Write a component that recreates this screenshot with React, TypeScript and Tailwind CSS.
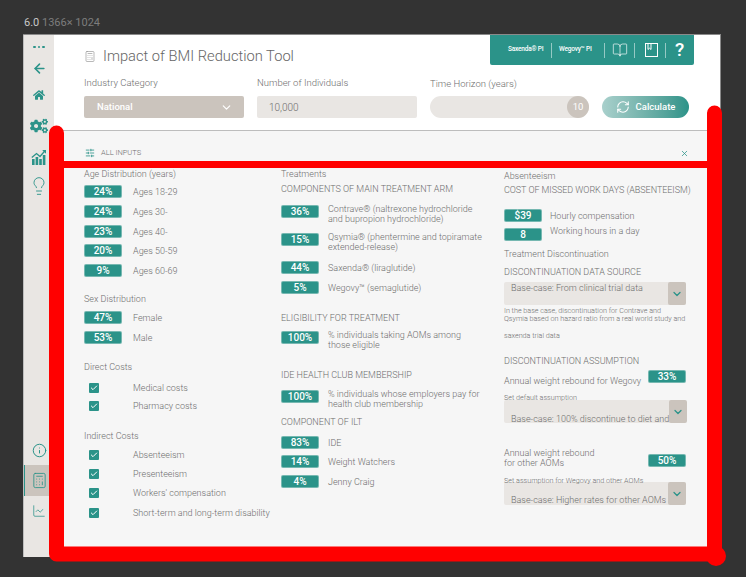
import { ArrowLeft, BookOpen, Calculator, Check, ChartLine, ChevronDown, Info, Lightbulb, RefreshCw, SlidersHorizontal, X } from "lucide-react";
import { FaCogs, FaHome } from "react-icons/fa";

function Pill({ value }: { value: string }) {
    return (
        <div className="w-[38px] h-[13px] shrink-0 rounded-[2px] bg-[#2b9389] border border-[#a9d0cc]/60 flex items-center justify-center text-[10px] font-medium text-white">
            {value}
        </div>
    );
}

function PillRow({ value, label, className }: { value: string; label: string; className: string }) {
    return (
        <div className={`flex items-center h-[13px] ${className}`}>
            <Pill value={value} />
            <span className="ml-[11px] whitespace-nowrap leading-[12px]">{label}</span>
        </div>
    );
}

function TallRow({ value, lines, className }: { value: string; lines: string[]; className: string }) {
    return (
        <div className={`flex items-start ${className}`}>
            <Pill value={value} />
            <div className="ml-[9px] -mt-px leading-[10px] whitespace-nowrap">
                {lines.map((line) => (
                    <div key={line}>{line}</div>
                ))}
            </div>
        </div>
    );
}

function CheckRow({ label, className }: { label: string; className: string }) {
    return (
        <div className={`flex items-center h-[10px] ${className}`}>
            <div className="ml-[5px] w-[10px] h-[10px] shrink-0 rounded-[1px] bg-[#2b9389] flex items-center justify-center">
                <Check className="w-[8px] h-[8px] text-white" strokeWidth={3} />
            </div>
            <span className="ml-[34px] whitespace-nowrap leading-[12px]">{label}</span>
        </div>
    );
}

function Heading({ children, className = "" }: { children: string; className?: string }) {
    return <div className={`h-[12px] leading-[12px] whitespace-nowrap ${className}`}>{children}</div>;
}

function Dropdown({ text, className, textClass }: { text: string; className: string; textClass: string }) {
    return (
        <div className={`w-[182px] h-[23px] rounded-[2px] bg-[#e9e6e3] flex justify-between ${className}`}>
            <span className={`pl-[7px] leading-[12px] whitespace-nowrap ${textClass}`}>{text}</span>
            <div className="w-[18px] h-[23px] shrink-0 rounded-[2px] bg-[#cbc4bd] flex items-center justify-center">
                <ChevronDown className="w-[12px] h-[12px] text-[#2b9389]" strokeWidth={2.5} />
            </div>
        </div>
    );
}

function BookmarkBook() {
    return (
        <svg viewBox="0 0 13 14" className="w-[13px] h-[14px]" fill="none" stroke="currentColor" strokeWidth="1">
            <rect x="0.5" y="0.5" width="12" height="13" />
            <path d="M3 0.5V6.5L4.5 5.2L6 6.5V0.5" />
        </svg>
    );
}

function BarsArrow() {
    return (
        <svg viewBox="0 0 16 16" className="w-[16px] h-[16px]" fill="#2b9389">
            <rect x="1" y="10" width="2.6" height="6" />
            <rect x="4.6" y="8" width="2.6" height="8" />
            <rect x="8.2" y="10" width="2.6" height="6" />
            <rect x="11.8" y="6" width="2.6" height="10" />
            <path d="M0.8 8.5L5.5 4.5L9 7.5L14 1.8" fill="none" stroke="#2b9389" strokeWidth="1.3" />
            <path d="M11.2 1H15V4.8Z" />
        </svg>
    );
}

function Divider() {
    return <div className="w-px h-[15px] bg-white/50" />;
}

export default function App() {
    return (
        <div className="relative w-[746px] h-[577px] overflow-hidden bg-[#333333] font-['Roboto',sans-serif] font-light text-[9px] text-[#6e6e6e]">
            <div className="h-[34px] pl-[24px] pt-[16px] text-[11px] leading-[14px] font-normal whitespace-nowrap">
                <span className="text-[#c8c8c8]">6.0</span> <span className="text-[#7d7d7d]">1366×&nbsp;1024</span>
            </div>

            <div className="ml-[23px] w-[698px] h-[523px] flex border-t border-r border-[#8a8a8a] bg-white">
                {/* Sidebar */}
                <aside className="w-[31px] shrink-0 border-l border-[#bdbdbd] bg-[#e9e6e3] flex flex-col items-stretch text-[#2b9389]">
                    <div className="h-[24px] flex items-center justify-center gap-[2px]">
                        <span className="w-[2.5px] h-[2.5px] rounded-full bg-[#2b9389]" />
                        <span className="w-[2.5px] h-[2.5px] rounded-full bg-[#2b9389]" />
                        <span className="w-[2.5px] h-[2.5px] rounded-full bg-[#2b9389]" />
                    </div>
                    <div className="h-[18px] flex items-center justify-center">
                        <ArrowLeft className="w-[15px] h-[15px]" strokeWidth={2.5} />
                    </div>
                    <div className="h-[36px] flex items-center justify-center">
                        <FaHome className="w-[12px] h-[12px]" />
                    </div>
                    <div className="h-[26px] flex items-center justify-center">
                        <FaCogs className="w-[18px] h-[18px]" />
                    </div>
                    <div className="h-[36px] flex items-center justify-center">
                        <BarsArrow />
                    </div>
                    <div className="h-[22px] flex items-center justify-center">
                        <Lightbulb className="w-[20px] h-[20px]" strokeWidth={1.1} />
                    </div>
                    <div className="mt-auto h-[30px] flex items-center justify-center">
                        <Info className="w-[15px] h-[15px]" strokeWidth={1.6} />
                    </div>
                    <div className="h-[31px] bg-[#cbc4bd] border-l border-[#2b9389] flex items-center justify-center">
                        <Calculator className="w-[17px] h-[17px]" strokeWidth={1.2} />
                    </div>
                    <div className="h-[30px] mb-[31px] flex items-center justify-center">
                        <ChartLine className="w-[14px] h-[14px]" strokeWidth={1.3} />
                    </div>
                </aside>

                <main className="flex-1 flex flex-col min-w-0">
                    {/* Header */}
                    <header className="h-[96px] shrink-0 border-b border-[#bdbdbd]">
                        <div className="h-[30px] flex justify-between">
                            <div className="ml-[30px] mt-[11px] h-[20px] flex items-center">
                                <Calculator className="w-[12px] h-[13px] text-[#8a8a8a]" strokeWidth={1.2} />
                                <h1 className="ml-[7px] text-[14.7px] leading-[20px] font-light text-[#666666] whitespace-nowrap">Impact of BMI Reduction Tool</h1>
                            </div>
                            <div className="w-[204px] mr-[26px] h-[30px] rounded-b-[2px] bg-[#2b9389] flex items-center pl-[18px] text-white">
                                <span className="w-[39px] text-[6.5px] font-medium tracking-[-0.2px] whitespace-nowrap">Saxenda® PI</span>
                                <div className="mx-[4px]"><Divider /></div>
                                <span className="w-[41px] ml-[3px] text-[6.5px] font-medium tracking-[-0.2px] whitespace-nowrap">Wegovy™ PI</span>
                                <div className="ml-[4px]"><Divider /></div>
                                <BookOpen className="ml-[7px] w-[16px] h-[16px]" strokeWidth={1} />
                                <div className="ml-[6px]"><Divider /></div>
                                <div className="ml-[10px]"><BookmarkBook /></div>
                                <div className="ml-[7px]"><Divider /></div>
                                <span className="ml-[9px] text-[19px] leading-[20px] font-medium">?</span>
                            </div>
                        </div>
                        <div className="mt-[12px] ml-[30px] flex gap-[13px] text-[9.5px]">
                            <div className="w-[160px]">
                                <div className="h-[12px] leading-[12px]">Industry Category</div>
                                <div className="mt-[7px] h-[22px] rounded-[2px] bg-[#cbc4bd] flex items-center justify-between pl-[13px] pr-[11px] text-white font-medium">
                                    <span>National</span>
                                    <ChevronDown className="w-[13px] h-[13px]" strokeWidth={2.2} />
                                </div>
                            </div>
                            <div className="w-[160px]">
                                <div className="h-[12px] leading-[12px]">Number of Individuals</div>
                                <div className="mt-[7px] h-[22px] rounded-[2px] bg-[#e9e6e3] flex items-center pl-[12px] text-[10px]">10,000</div>
                            </div>
                            <div className="w-[159px]">
                                <div className="h-[12px] mt-px -mb-px leading-[12px]">Time Horizon (years)</div>
                                <div className="mt-[7px] h-[22px] rounded-full bg-[#e9e6e3] flex justify-end">
                                    <div className="w-[22px] h-[22px] rounded-full bg-[#cbc4bd] flex items-center justify-center text-white font-normal">10</div>
                                </div>
                            </div>
                            <div className="w-[87px] h-[22px] mt-[19px] rounded-full bg-gradient-to-r from-[#a9d0cc] to-[#2b9389] flex items-center justify-center gap-[6px] text-white font-medium">
                                <RefreshCw className="w-[14px] h-[14px]" strokeWidth={1.8} />
                                <span>Calculate</span>
                            </div>
                        </div>
                    </header>

                    {/* Inputs panel */}
                    <section className="flex-1 bg-[#f6f6f6]">
                        <div className="h-[37px] pl-[31px] pr-[31px] pb-[10px] flex items-end justify-between">
                            <div className="flex items-center">
                                <SlidersHorizontal className="w-[10px] h-[10px] text-[#2b9389]" strokeWidth={2} />
                                <span className="ml-[6px] text-[7.5px] leading-[10px]">ALL INPUTS</span>
                            </div>
                            <X className="w-[9px] h-[9px] text-[#2b9389]" strokeWidth={2} />
                        </div>

                        <div className="pl-[30px] flex">
                            <div className="w-[197px] shrink-0 flex flex-col">
                                <Heading>Age Distribution (years)</Heading>
                                <PillRow className="mt-[5px]" value="24%" label="Ages 18-29" />
                                <PillRow className="mt-[7px]" value="24%" label="Ages 30-" />
                                <PillRow className="mt-[7px]" value="23%" label="Ages 40-" />
                                <PillRow className="mt-[6px]" value="20%" label="Ages 50-59" />
                                <PillRow className="mt-[7px]" value="9%" label="Ages 60-69" />
                                <Heading className="mt-[16px]">Sex Distribution</Heading>
                                <PillRow className="mt-[6px]" value="47%" label="Female" />
                                <PillRow className="mt-[7px]" value="53%" label="Male" />
                                <Heading className="mt-[17px]">Direct Costs</Heading>
                                <CheckRow className="mt-[10px]" label="Medical costs" />
                                <CheckRow className="mt-[8px]" label="Pharmacy costs" />
                                <Heading className="mt-[19px]">Indirect Costs</Heading>
                                <CheckRow className="mt-[8px]" label="Absenteeism" />
                                <CheckRow className="mt-[9px]" label="Presenteeism" />
                                <CheckRow className="mt-[9px]" label="Workers' compensation" />
                                <CheckRow className="mt-[10px]" label="Short-term and long-term disability" />
                            </div>

                            <div className="w-[223px] shrink-0 flex flex-col">
                                <Heading>Treatments</Heading>
                                <Heading className="mt-[3px]">COMPONENTS OF MAIN TREATMENT ARM</Heading>
                                <TallRow className="mt-[10px]" value="36%" lines={["Contrave® (naltrexone hydrochloride", "and bupropion hydrochloride)"]} />
                                <TallRow className="mt-[9px]" value="15%" lines={["Qsymia® (phentermine and topiramate", "extended-release)"]} />
                                <PillRow className="mt-[9px] [&>span]:ml-[9px]" value="44%" label="Saxenda® (liraglutide)" />
                                <PillRow className="mt-[7px] [&>span]:ml-[9px]" value="5%" label="Wegovy™ (semaglutide)" />
                                <Heading className="mt-[18px]">ELIGIBILITY FOR TREATMENT</Heading>
                                <TallRow className="mt-[7px]" value="100%" lines={["% individuals taking AOMs among", "those eligible"]} />
                                <Heading className="mt-[19px]">IDE HEALTH CLUB MEMBERSHIP</Heading>
                                <TallRow className="mt-[9px]" value="100%" lines={["% individuals whose employers pay for", "health club membership"]} />
                                <Heading className="mt-[7px]">COMPONENT OF ILT</Heading>
                                <PillRow className="mt-[8px] [&>span]:ml-[9px]" value="83%" label="IDE" />
                                <PillRow className="mt-[6px] [&>span]:ml-[9px]" value="14%" label="Weight Watchers" />
                                <PillRow className="mt-[7px] [&>span]:ml-[9px]" value="4%" label="Jenny Craig" />
                            </div>

                            <div className="w-[182px] shrink-0 flex flex-col">
                                <Heading className="mt-[2px]">Absenteeism</Heading>
                                <Heading className="mt-[2px] tracking-[-0.05px]">COST OF MISSED WORK DAYS (ABSENTEEISM)</Heading>
                                <PillRow className="mt-[13px] [&>span]:ml-[8px]" value="$39" label="Hourly compensation" />
                                <PillRow className="mt-[6px] [&>span]:ml-[8px] [&>span]:mb-[7px]" value="8" label="Working hours in a day" />
                                <Heading className="mt-[7px]">Treatment Discontinuation</Heading>
                                <Heading className="mt-[6px]">DISCONTINUATION DATA SOURCE</Heading>
                                <Dropdown className="mt-[4px] items-start" textClass="" text="Base-case: From clinical trial data" />
                                <div className="mt-[2px] text-[7.2px] leading-[8px] whitespace-nowrap">
                                    <div>In the base case, discontinuation for Contrave and</div>
                                    <div>Qsymia based on hazard ratio from a real world study and</div>
                                    <div className="mt-[9px]">saxenda trial data</div>
                                </div>
                                <Heading className="mt-[15px]">DISCONTINUATION ASSUMPTION</Heading>
                                <div className="mt-[3px] flex justify-between items-start">
                                    <span className="mt-[5px] leading-[12px] whitespace-nowrap">Annual weight rebound for Wegovy</span>
                                    <Pill value="33%" />
                                </div>
                                <div className="relative z-10 mt-[7px] h-[8px] text-[7.2px] leading-[8px] whitespace-nowrap">Set default assumption</div>
                                <Dropdown className="-mt-[2px] items-end" textClass="-mb-[2px]" text="Base-case: 100% discontinue to diet and" />
                                <div className="mt-[25px] flex justify-between items-start">
                                    <span className="leading-[10px] whitespace-nowrap">
                                        Annual weight rebound
                                        <br />
                                        for other AOMs
                                    </span>
                                    <div className="mt-[6px]"><Pill value="50%" /></div>
                                </div>
                                <div className="relative z-10 mt-[9px] h-[8px] text-[7.2px] leading-[8px] whitespace-nowrap">Set assumption for Wegovy and other AOMs</div>
                                <Dropdown className="-mt-[3px] items-end" textClass="-mb-[1px]" text="Base-case: Higher rates for other AOMs" />
                            </div>
                        </div>
                    </section>
                </main>
            </div>

            {/* Red marker drawn over the screenshot */}
            <svg className="absolute inset-0 pointer-events-none" width="746" height="577" viewBox="0 0 746 577" fill="none" stroke="#ff0000" strokeWidth="15" strokeLinecap="round" strokeLinejoin="round">
                <path d="M56.5 133V554H714.5V113" />
                <path d="M56.5 164.5H714.5" strokeWidth="7" strokeLinecap="butt" />
                <circle cx="716" cy="556" r="10" fill="#ff0000" stroke="none" />
            </svg>
        </div>
    );
}
